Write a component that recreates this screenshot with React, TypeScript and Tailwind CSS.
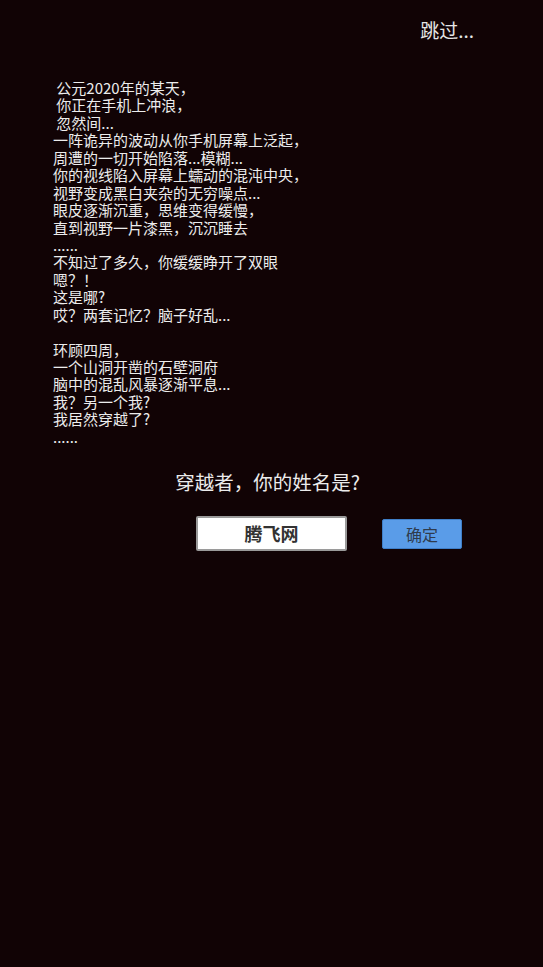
import type { FC, JSX } from "react";

const storyLines: string[] = [
    " 公元2020年的某天，",
    " 你正在手机上冲浪，",
    " 忽然间...",
    "一阵诡异的波动从你手机屏幕上泛起，",
    "周遭的一切开始陷落...模糊...",
    "你的视线陷入屏幕上蠕动的混沌中央，",
    "视野变成黑白夹杂的无穷噪点...",
    "眼皮逐渐沉重，思维变得缓慢，",
    "直到视野一片漆黑，沉沉睡去",
    "......",
    "不知过了多久，你缓缓睁开了双眼",
    "嗯？！",
    "这是哪?",
    "哎？两套记忆？脑子好乱...",
    "",
    "环顾四周，",
    "一个山洞开凿的石壁洞府",
    "脑中的混乱风暴逐渐平息...",
    "我？另一个我?",
    "我居然穿越了?",
    "......",
];

const App: FC = (): JSX.Element => {
    return (
        <div
            className="w-[543px] h-[967px] bg-[#110305] text-[#ececec] relative overflow-hidden"
            style={{ fontFamily: '"Noto Sans CJK SC", "Noto Sans", sans-serif' }}
        >
            <div className="flex justify-end pr-[69px] pt-[18px]">
                <button className="text-[19px] leading-[24px] text-[#e6e6e6]">跳过...</button>
            </div>

            <div className="pl-[53px] pt-[37px] text-[15px] leading-[17.45px] whitespace-pre">
                {storyLines.map((line: string, index: number) => (
                    <p key={index} className="h-[17.45px]">{line}</p>
                ))}
            </div>

            <p className="text-center text-[19.5px] leading-[26px] mt-[24px] pr-[8px] text-[#ececec]">
                穿越者，你的姓名是?
            </p>

            <div className="flex items-center mt-[21px] pl-[196px]">
                <div className="w-[151px] h-[35px] bg-white border-2 border-[#9a9a9a] rounded-[2px] flex items-center justify-center">
                    <span className="text-[18px] font-bold text-[#333]">腾飞网</span>
                </div>
                <button className="ml-[35px] w-[80px] h-[30px] bg-[#5a9ce8] rounded-[2px] border border-[#3f7fc8] text-[16px] text-[#2f3b4c] flex items-center justify-center">
                    确定
                </button>
            </div>
        </div>
    );
};

export default App;
